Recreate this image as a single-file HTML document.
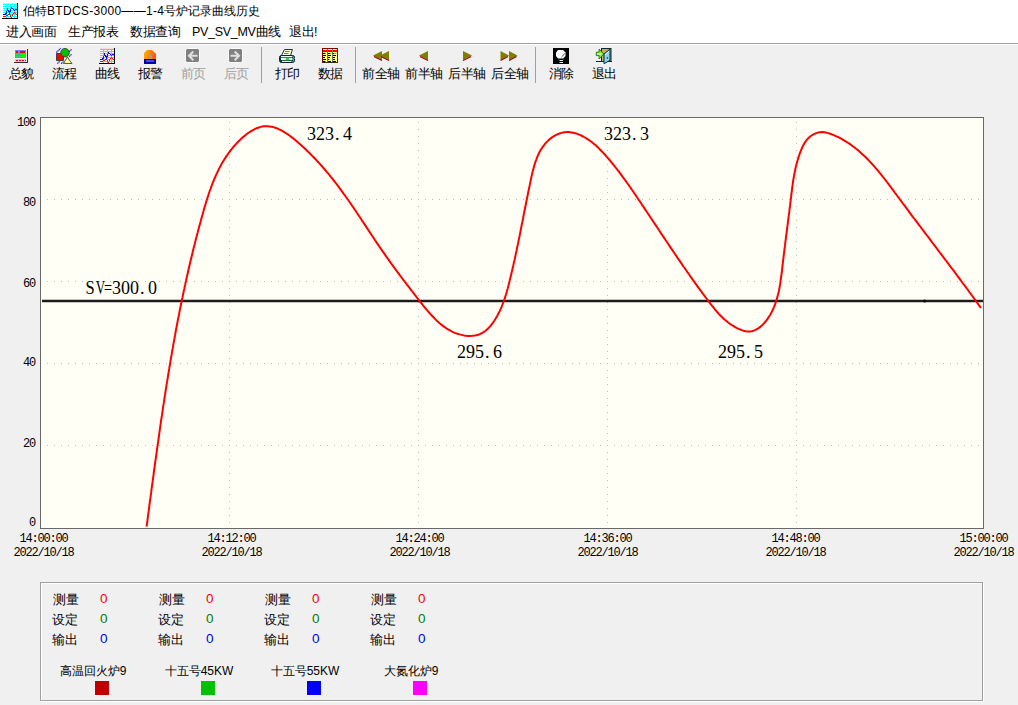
<!DOCTYPE html>
<html><head><meta charset="utf-8">
<style>
html,body{margin:0;padding:0;}
body{width:1018px;height:705px;overflow:hidden;background:#f0f0f0;position:relative;font-family:"Liberation Sans",sans-serif;font-size:12.5px;color:#000;}
#top{position:absolute;left:0;top:0;width:1018px;height:43px;background:#fff;}
#sep1{position:absolute;left:0;top:43px;width:1018px;height:1px;background:#a0a0a0;}
#sep2{position:absolute;left:0;top:44px;width:1018px;height:1px;background:#fff;}
i{font-style:normal;display:inline-block;width:1em;text-align:center;}
.t{position:absolute;white-space:nowrap;line-height:14px;}
.tl{position:absolute;top:67px;width:60px;text-align:center;line-height:14px;white-space:nowrap;}
.tl.dis{color:#a0a0a0;}
.vs{position:absolute;top:47px;width:1px;height:36px;background:#a0a0a0;}
.ic{position:absolute;}
#chart{position:absolute;left:0;top:0;}
.g{stroke:#bcbcb8;stroke-width:1;stroke-dasharray:1 6;}
.yl{position:absolute;left:0;width:35px;text-align:right;font-family:"Liberation Mono",monospace;font-size:12px;line-height:12px;letter-spacing:-1.2px;}
.xl,.xd{position:absolute;width:80px;text-align:center;font-family:"Liberation Mono",monospace;font-size:12px;line-height:12px;letter-spacing:-1.2px;}
.lbl{position:absolute;font-family:"Liberation Serif",serif;font-size:18px;line-height:18px;white-space:nowrap;}
.c{display:inline-block;width:9px;text-align:center;}
.sq8{display:inline-block;transform:scaleX(0.78);}
#panel{position:absolute;left:40px;top:582px;width:941px;height:117px;border:1px solid #a0a0a0;box-shadow:1px 1px 0 #fff, inset 1px 1px 0 #fff;}
.lg,.lz{position:absolute;line-height:14px;white-space:nowrap;}
.lz{font-size:13.5px;margin-top:-1px;}
.ln{position:absolute;width:100px;text-align:center;line-height:14px;white-space:nowrap;font-size:12px;}
.sq{position:absolute;width:14px;height:14px;}
</style></head><body>
<div id="top"></div>
<div id="sep1"></div><div id="sep2"></div>

<div class="t" style="left:23px;top:4px;font-size:12px;letter-spacing:0.3px"><i>伯</i><i>特</i>BTDCS-3000——1-4<i>号</i><i>炉</i><i>记</i><i>录</i><i>曲</i><i>线</i><i>历</i><i>史</i></div>

<div class="t" style="left:6px;top:25px"><i>进</i><i>入</i><i>画</i><i>面</i></div>
<div class="t" style="left:68px;top:25px"><i>生</i><i>产</i><i>报</i><i>表</i></div>
<div class="t" style="left:130px;top:25px"><i>数</i><i>据</i><i>查</i><i>询</i></div>
<div class="t" style="left:192px;top:25px;letter-spacing:-0.3px">PV_SV_MV<i>曲</i><i>线</i></div>
<div class="t" style="left:289px;top:25px"><i>退</i><i>出</i>!</div>

<!-- toolbar -->
<svg style="position:absolute;left:0;top:0" width="700" height="90" viewBox="0 0 700 90">

<g shape-rendering="crispEdges">
<rect x="3" y="3" width="14" height="15" fill="#00ffff"/>
<rect x="3" y="3" width="14" height="1" fill="#ffd8d8"/>
<g fill="#ffffff">
<rect x="3" y="5" width="3" height="1"/><rect x="7" y="5" width="3" height="1"/><rect x="11" y="5" width="3" height="1"/><rect x="15" y="5" width="2" height="1"/>
<rect x="3" y="7" width="3" height="1"/><rect x="7" y="7" width="3" height="1"/><rect x="11" y="7" width="3" height="1"/><rect x="15" y="7" width="2" height="1"/>
<rect x="3" y="9" width="3" height="1"/><rect x="7" y="9" width="3" height="1"/><rect x="11" y="9" width="3" height="1"/><rect x="15" y="9" width="2" height="1"/>
<rect x="3" y="11" width="3" height="1"/><rect x="7" y="11" width="3" height="1"/><rect x="11" y="11" width="3" height="1"/><rect x="15" y="11" width="2" height="1"/>
<rect x="3" y="13" width="3" height="1"/><rect x="7" y="13" width="3" height="1"/><rect x="11" y="13" width="3" height="1"/><rect x="15" y="13" width="2" height="1"/>
<rect x="3" y="15" width="3" height="1"/><rect x="7" y="15" width="3" height="1"/><rect x="11" y="15" width="3" height="1"/><rect x="15" y="15" width="2" height="1"/>
<rect x="3" y="17" width="3" height="1"/><rect x="7" y="17" width="3" height="1"/><rect x="11" y="17" width="3" height="1"/><rect x="15" y="17" width="2" height="1"/>
</g>
<g fill="#0000ff">
<rect x="3" y="14" width="3" height="1"/><rect x="5" y="13" width="2" height="1"/><rect x="6" y="11" width="1" height="2"/><rect x="7" y="8" width="1" height="3"/><rect x="8" y="10" width="1" height="2"/><rect x="9" y="11" width="1" height="3"/><rect x="10" y="9" width="1" height="3"/><rect x="11" y="7" width="1" height="2"/><rect x="12" y="8" width="1" height="1"/><rect x="13" y="9" width="1" height="1"/><rect x="14" y="10" width="1" height="1"/><rect x="15" y="9" width="2" height="1"/>
</g>
<g fill="#ff0000">
<rect x="3" y="16" width="3" height="1"/><rect x="6" y="15" width="2" height="1"/><rect x="8" y="14" width="2" height="1"/><rect x="10" y="15" width="1" height="2"/><rect x="11" y="17" width="1" height="1"/><rect x="12" y="14" width="1" height="2"/><rect x="13" y="13" width="1" height="1"/><rect x="14" y="12" width="1" height="1"/><rect x="15" y="13" width="1" height="1"/><rect x="16" y="14" width="1" height="1"/>
</g>
<rect x="17" y="3" width="1" height="16" fill="#000"/>
<rect x="2" y="18" width="16" height="1" fill="#000"/>
</g>
<g transform="translate(97,45)" shape-rendering="crispEdges">
<rect x="3" y="3" width="14" height="15" fill="#00ffff"/>
<rect x="3" y="3" width="14" height="1" fill="#ffd8d8"/>
<g fill="#ffffff">
<rect x="3" y="5" width="3" height="1"/><rect x="7" y="5" width="3" height="1"/><rect x="11" y="5" width="3" height="1"/><rect x="15" y="5" width="2" height="1"/>
<rect x="3" y="7" width="3" height="1"/><rect x="7" y="7" width="3" height="1"/><rect x="11" y="7" width="3" height="1"/><rect x="15" y="7" width="2" height="1"/>
<rect x="3" y="9" width="3" height="1"/><rect x="7" y="9" width="3" height="1"/><rect x="11" y="9" width="3" height="1"/><rect x="15" y="9" width="2" height="1"/>
<rect x="3" y="11" width="3" height="1"/><rect x="7" y="11" width="3" height="1"/><rect x="11" y="11" width="3" height="1"/><rect x="15" y="11" width="2" height="1"/>
<rect x="3" y="13" width="3" height="1"/><rect x="7" y="13" width="3" height="1"/><rect x="11" y="13" width="3" height="1"/><rect x="15" y="13" width="2" height="1"/>
<rect x="3" y="15" width="3" height="1"/><rect x="7" y="15" width="3" height="1"/><rect x="11" y="15" width="3" height="1"/><rect x="15" y="15" width="2" height="1"/>
<rect x="3" y="17" width="3" height="1"/><rect x="7" y="17" width="3" height="1"/><rect x="11" y="17" width="3" height="1"/><rect x="15" y="17" width="2" height="1"/>
</g>
<g fill="#0000ff">
<rect x="3" y="14" width="3" height="1"/><rect x="5" y="13" width="2" height="1"/><rect x="6" y="11" width="1" height="2"/><rect x="7" y="8" width="1" height="3"/><rect x="8" y="10" width="1" height="2"/><rect x="9" y="11" width="1" height="3"/><rect x="10" y="9" width="1" height="3"/><rect x="11" y="7" width="1" height="2"/><rect x="12" y="8" width="1" height="1"/><rect x="13" y="9" width="1" height="1"/><rect x="14" y="10" width="1" height="1"/><rect x="15" y="9" width="2" height="1"/>
</g>
<g fill="#ff0000">
<rect x="3" y="16" width="3" height="1"/><rect x="6" y="15" width="2" height="1"/><rect x="8" y="14" width="2" height="1"/><rect x="10" y="15" width="1" height="2"/><rect x="11" y="17" width="1" height="1"/><rect x="12" y="14" width="1" height="2"/><rect x="13" y="13" width="1" height="1"/><rect x="14" y="12" width="1" height="1"/><rect x="15" y="13" width="1" height="1"/><rect x="16" y="14" width="1" height="1"/>
</g>
<rect x="17" y="3" width="1" height="16" fill="#000"/>
<rect x="2" y="18" width="16" height="1" fill="#000"/>
</g>

<!-- zongmao -->
<g shape-rendering="crispEdges">
<rect x="14" y="49" width="13" height="13" fill="#f4f4e8"/>
<rect x="15" y="50" width="11" height="8" fill="#8080ff"/>
<rect x="16" y="51" width="2" height="2" fill="#ff0000"/><rect x="20" y="51" width="5" height="2" fill="#ff0000"/>
<rect x="16" y="54" width="2" height="1" fill="#00ff00"/><rect x="20" y="54" width="5" height="1" fill="#00ff00"/>
<rect x="16" y="56" width="2" height="1" fill="#00ff00"/><rect x="20" y="56" width="5" height="1" fill="#00ff00"/>
<rect x="15" y="58" width="11" height="1" fill="#ffffff"/>
<rect x="15" y="59" width="11" height="3" fill="#c8c8ff"/>
<rect x="16" y="60" width="2" height="1" fill="#ff0000"/><rect x="19" y="60" width="2" height="1" fill="#ff0000"/><rect x="22" y="60" width="2" height="1" fill="#ff0000"/><rect x="25" y="60" width="1" height="1" fill="#ff0000"/>
<rect x="27" y="49" width="1" height="14" fill="#303030"/>
<rect x="14" y="62" width="14" height="1" fill="#303030"/>
</g>

<!-- liucheng -->
<g>
<path d="M56.5 53.5H61.5L63.5 55.5V60.5H56.5Z" fill="#ff0000" stroke="#404040" stroke-width="1"/>
<circle cx="65" cy="52.7" r="4.3" fill="#00c000" stroke="#303030" stroke-width="0.8"/>
<path d="M67.5 57L70 61L72 63.5H63.5L65.5 60Z" fill="#ffff90" stroke="#303030" stroke-width="0.8"/>
<g stroke="#0000ff" stroke-width="1.1" stroke-dasharray="1.3 0.5">
<line x1="56.3" y1="52.5" x2="60.7" y2="48.2"/><line x1="57.4" y1="63.6" x2="59.7" y2="61.2"/><line x1="61.2" y1="63.6" x2="63.9" y2="61.3"/><line x1="69.2" y1="51.6" x2="71.7" y2="49.3"/><line x1="69.2" y1="56.6" x2="71.7" y2="54.2"/>
</g>
</g>

<!-- baojing -->
<defs><linearGradient id="og" x1="0" y1="0" x2="1" y2="0.3"><stop offset="0" stop-color="#ffb800"/><stop offset="1" stop-color="#ff5800"/></linearGradient></defs>
<path d="M144 59V53L147 50H152L156 54V59Z" fill="url(#og)"/>
<path d="M149 54H150.5L152 57V59H149Z" fill="#90a0b0"/>
<rect x="144" y="59" width="12" height="5" fill="#0000a0"/>
<rect x="146" y="60" width="8" height="2" fill="#4848e0"/>

<!-- qianye / houye -->
<rect x="185.5" y="48.5" width="14" height="14" rx="2" fill="#808080" stroke="#ffffff" stroke-width="1"/>
<path d="M193.3 51.5L189 55.8L193.3 60.2M189.5 55.8H197.5" fill="none" stroke="#e0e0e0" stroke-width="2"/>
<rect x="228.5" y="48.5" width="14" height="14" rx="2" fill="#808080" stroke="#ffffff" stroke-width="1"/>
<path d="M234.7 51.5L239 55.8L234.7 60.2M238.5 55.8H230.5" fill="none" stroke="#e0e0e0" stroke-width="2"/>

<!-- dayin -->
<path d="M284.5 49.5H292.5L290.5 55.5H281.5Z" fill="#ffffc8" stroke="#1c3c3c" stroke-width="1"/>
<path d="M285 51.5H289.5M284 53.5H288.5" stroke="#707060" stroke-width="0.9"/>
<rect x="279.5" y="55.5" width="15" height="7" rx="2" fill="#0a3a3a" stroke="#002a2a" stroke-width="1"/>
<rect x="281" y="56" width="11" height="1.3" fill="#f0ffff"/>
<rect x="281" y="58" width="11.5" height="2" fill="#f4ffff"/>
<rect x="285.8" y="58" width="3.2" height="2" fill="#20e020"/>
<rect x="282" y="60.8" width="9.5" height="1.2" fill="#e0f4ff"/>
<path d="M292.5 56.5L294 57.5M293 59.5L294.5 58.5M292.5 61.5L294 60.5" stroke="#a0e0e0" stroke-width="0.9"/>
<!-- shuju -->
<g shape-rendering="crispEdges">
<rect x="322" y="48" width="16" height="15" fill="#ffffff"/>
<rect x="322" y="48" width="16" height="1" fill="#800000"/>
<rect x="322" y="48" width="1" height="15" fill="#800000"/>
<rect x="337" y="48" width="1" height="15" fill="#303030"/>
<rect x="322" y="62" width="16" height="1" fill="#303030"/>
<rect x="327" y="49" width="1" height="13" fill="#707070"/>
<rect x="332" y="49" width="1" height="13" fill="#707070"/>
<g fill="#ff0000"><rect x="323" y="50" width="4" height="2"/><rect x="328" y="50" width="4" height="2"/><rect x="333" y="50" width="4" height="2"/></g>
<g fill="#ffff80"><rect x="323" y="52" width="4" height="1"/><rect x="328" y="52" width="4" height="1"/><rect x="333" y="52" width="4" height="1"/>
<rect x="323" y="54" width="4" height="1"/><rect x="328" y="54" width="4" height="1"/><rect x="333" y="54" width="4" height="1"/>
<rect x="323" y="56" width="4" height="1"/><rect x="328" y="56" width="4" height="1"/><rect x="333" y="56" width="4" height="1"/>
<rect x="323" y="58" width="4" height="1"/><rect x="328" y="58" width="4" height="1"/><rect x="333" y="58" width="4" height="1"/>
<rect x="323" y="60" width="4" height="1"/><rect x="328" y="60" width="4" height="1"/><rect x="333" y="60" width="4" height="1"/></g>
<g fill="#000000"><rect x="323" y="53" width="3" height="1"/><rect x="328" y="53" width="3" height="1"/><rect x="333" y="53" width="3" height="1"/>
<rect x="323" y="55" width="3" height="1"/><rect x="328" y="55" width="3" height="1"/><rect x="333" y="55" width="3" height="1"/>
<rect x="323" y="57" width="2" height="1"/><rect x="328" y="57" width="2" height="1"/><rect x="333" y="57" width="2" height="1"/>
<rect x="323" y="59" width="3" height="1"/><rect x="328" y="59" width="2" height="1"/><rect x="333" y="59" width="2" height="1"/>
<rect x="323" y="61" width="2" height="1"/><rect x="328" y="61" width="3" height="1"/><rect x="333" y="61" width="3" height="1"/></g>
<g fill="#00ff00"><rect x="325" y="53" width="1" height="1"/><rect x="330" y="53" width="1" height="1"/><rect x="334" y="53" width="2" height="1"/><rect x="329" y="59" width="1" height="1"/><rect x="325" y="61" width="1" height="1"/></g>
</g>

<!-- axis arrows -->
<g>
<path d="M373 55.5L382 51V60Z M380 55.5L389 51V60Z" fill="#808000"/>
<path d="M374 56.5L382 60.5M381 56.5L389 60.5" stroke="#a00000" stroke-width="1.2"/>
<path d="M419 55.5L428 51V60Z" fill="#808000"/>
<path d="M420 56.5L428 60.5" stroke="#a00000" stroke-width="1.2"/>
<path d="M472 55.5L463 51V60Z" fill="#808000"/>
<path d="M471 56.5L463 60.5" stroke="#a00000" stroke-width="1.2"/>
<path d="M509 55.5L500.5 51V60Z M517.5 55.5L509 51V60Z" fill="#808000"/>
<path d="M508 56.5L500.5 60.5M516.5 56.5L509 60.5" stroke="#a00000" stroke-width="1.2"/>
</g>

<!-- xiaochu -->
<rect x="553" y="48" width="16" height="16" fill="#000"/>
<path d="M558 50H563L565.5 52.5V56L563 58.5H558L556 56V52.5Z" fill="#ffffff"/>
<path d="M562 56L565 53M561 57.5L564.5 54.5" stroke="#606060" stroke-width="0.6"/>
<rect x="558" y="58.5" width="1.2" height="1" fill="#00a0a0"/><rect x="562.5" y="58.5" width="1.2" height="1" fill="#00a0a0"/>
<rect x="559.5" y="60" width="3.5" height="0.9" fill="#ffffff"/><rect x="559.5" y="62" width="3.5" height="0.9" fill="#ffffff"/>

<!-- tuichu -->
<rect x="601.5" y="48.5" width="9.5" height="13" fill="#c8a858" stroke="#003040" stroke-width="1"/>
<path d="M604 54L610 49V60.3L604 63.7Z" fill="#88d4f0" stroke="#003040" stroke-width="1"/>
<path d="M605 55L609 51.5" stroke="#d8f4ff" stroke-width="1"/>
<rect x="606.8" y="57.2" width="1" height="1.6" fill="#003040"/>
<path d="M596.3 52.2H599.1V49.1L603.9 54L599.1 59V55.6H596.3Z" fill="#7cf030" stroke="#2a6a00" stroke-width="0.9"/>
<path d="M597 54H601.5" stroke="#e8ffd0" stroke-width="1"/>
<path d="M596 61.5H602" stroke="#003030" stroke-width="1"/>
<path d="M610.8 60.8L612 62" stroke="#003030" stroke-width="1"/>
</svg>

<div class="tl" style="left:-9px"><i>总</i><i>貌</i></div>
<div class="tl" style="left:34px"><i>流</i><i>程</i></div>
<div class="tl" style="left:77px"><i>曲</i><i>线</i></div>
<div class="tl" style="left:120px"><i>报</i><i>警</i></div>
<div class="tl dis" style="left:163px"><i>前</i><i>页</i></div>
<div class="tl dis" style="left:206px"><i>后</i><i>页</i></div>
<div class="tl" style="left:257px"><i>打</i><i>印</i></div>
<div class="tl" style="left:300px"><i>数</i><i>据</i></div>
<div class="tl" style="left:351px"><i>前</i><i>全</i><i>轴</i></div>
<div class="tl" style="left:394px"><i>前</i><i>半</i><i>轴</i></div>
<div class="tl" style="left:437px"><i>后</i><i>半</i><i>轴</i></div>
<div class="tl" style="left:480px"><i>后</i><i>全</i><i>轴</i></div>
<div class="tl" style="left:531px"><i>消</i><i>除</i></div>
<div class="tl" style="left:574px"><i>退</i><i>出</i></div>

<div class="vs" style="left:261px"></div>
<div class="vs" style="left:355px"></div>
<div class="vs" style="left:535px"></div>

<!-- chart -->
<svg id="chart" width="1018" height="705" viewBox="0 0 1018 705">
<rect x="40.5" y="117.5" width="943" height="411" fill="#fffff5" stroke="#696969" stroke-width="1"/>
<line x1="47" y1="445.5" x2="983" y2="445.5" class="g"/>
<line x1="47" y1="363.5" x2="983" y2="363.5" class="g"/>
<line x1="47" y1="281.5" x2="983" y2="281.5" class="g"/>
<line x1="47" y1="199.5" x2="983" y2="199.5" class="g"/>
<line x1="229.5" y1="122" x2="229.5" y2="199" class="g"/>
<line x1="229.5" y1="206" x2="229.5" y2="281" class="g"/>
<line x1="229.5" y1="288" x2="229.5" y2="363" class="g"/>
<line x1="229.5" y1="370" x2="229.5" y2="445" class="g"/>
<line x1="229.5" y1="452" x2="229.5" y2="527" class="g"/>
<line x1="418.5" y1="122" x2="418.5" y2="199" class="g"/>
<line x1="418.5" y1="206" x2="418.5" y2="281" class="g"/>
<line x1="418.5" y1="288" x2="418.5" y2="363" class="g"/>
<line x1="418.5" y1="370" x2="418.5" y2="445" class="g"/>
<line x1="418.5" y1="452" x2="418.5" y2="527" class="g"/>
<line x1="607.5" y1="122" x2="607.5" y2="199" class="g"/>
<line x1="607.5" y1="206" x2="607.5" y2="281" class="g"/>
<line x1="607.5" y1="288" x2="607.5" y2="363" class="g"/>
<line x1="607.5" y1="370" x2="607.5" y2="445" class="g"/>
<line x1="607.5" y1="452" x2="607.5" y2="527" class="g"/>
<line x1="796.5" y1="122" x2="796.5" y2="199" class="g"/>
<line x1="796.5" y1="206" x2="796.5" y2="281" class="g"/>
<line x1="796.5" y1="288" x2="796.5" y2="363" class="g"/>
<line x1="796.5" y1="370" x2="796.5" y2="445" class="g"/>
<line x1="796.5" y1="452" x2="796.5" y2="527" class="g"/>
<line x1="42" y1="301" x2="983" y2="301" stroke="#1c1c1c" stroke-width="2.3"/>
<circle cx="924.6" cy="301" r="1.5" fill="#0c0c0c"/>
<polyline points="146.6,526.6 146.9,524.4 147.2,522.3 147.5,520.1 147.7,518.0 148.0,515.9 148.3,513.7 148.6,511.6 148.9,509.5 149.2,507.3 149.4,505.2 149.7,503.0 150.0,500.9 150.3,498.8 150.6,496.6 150.9,494.5 151.2,492.4 151.4,490.2 151.7,488.1 152.0,486.0 152.3,483.8 152.6,481.7 152.9,479.6 153.2,477.4 153.5,475.3 153.7,473.2 154.0,471.0 154.3,468.9 154.6,466.8 154.9,464.6 155.2,462.5 155.5,460.4 155.8,458.2 156.1,456.1 156.4,454.0 156.7,451.9 157.0,449.7 157.3,447.6 157.6,445.5 157.9,443.3 158.2,441.2 158.5,439.1 158.8,437.0 159.1,434.8 159.4,432.7 159.7,430.6 160.0,428.4 160.3,426.3 160.6,424.2 160.9,422.1 161.2,419.9 161.5,417.8 161.9,415.7 162.2,413.6 162.5,411.4 162.8,409.3 163.1,407.2 163.4,405.1 163.8,402.9 164.1,400.8 164.4,398.7 164.7,396.6 165.1,394.5 165.4,392.3 165.7,390.2 166.1,388.1 166.4,386.0 166.7,383.8 167.1,381.7 167.4,379.6 167.8,377.5 168.1,375.4 168.5,373.3 168.8,371.1 169.2,369.0 169.5,366.9 169.9,364.8 170.2,362.7 170.6,360.6 170.9,358.4 171.3,356.3 171.7,354.2 172.0,352.1 172.4,350.0 172.8,347.9 173.1,345.8 173.5,343.6 173.9,341.5 174.3,339.4 174.7,337.3 175.1,335.2 175.4,333.1 175.8,331.0 176.2,328.9 176.6,326.8 177.0,324.7 177.4,322.5 177.8,320.4 178.2,318.3 178.7,316.2 179.1,314.1 179.5,312.0 179.9,309.9 180.3,307.8 180.7,305.7 181.2,303.6 181.6,301.5 182.0,299.4 182.5,297.3 182.9,295.2 183.4,293.1 183.8,291.0 184.3,288.9 184.7,286.8 185.2,284.7 185.6,282.6 186.1,280.5 186.5,278.4 187.0,276.3 187.5,274.2 188.0,272.1 188.4,270.0 188.9,267.9 189.4,265.8 189.9,263.7 190.4,261.6 190.9,259.5 191.4,257.5 191.9,255.4 192.4,253.3 192.9,251.2 193.4,249.1 193.9,247.0 194.5,244.9 195.0,242.8 195.5,240.7 196.0,238.7 196.6,236.6 197.1,234.5 197.7,232.4 198.2,230.3 198.8,228.2 199.3,226.1 199.9,224.1 200.5,222.0 201.0,219.9 201.6,217.8 202.2,215.7 202.8,213.7 203.4,211.6 203.9,209.5 204.5,207.4 205.2,205.4 205.8,203.3 206.4,201.2 207.0,199.2 207.7,197.1 208.4,195.1 209.0,193.0 209.7,191.0 210.5,189.0 211.2,186.9 212.0,184.9 212.7,182.9 213.5,181.0 214.3,179.0 215.2,177.0 216.0,175.1 216.9,173.1 217.9,171.2 218.8,169.3 219.8,167.4 220.8,165.5 221.8,163.6 222.9,161.8 224.0,160.0 225.2,158.1 226.3,156.4 227.6,154.6 228.8,152.8 230.1,151.1 231.4,149.4 232.8,147.7 234.2,146.0 235.7,144.4 237.2,142.7 238.7,141.2 240.3,139.6 242.0,138.1 243.7,136.6 245.4,135.2 247.1,133.8 248.9,132.5 250.7,131.4 252.5,130.3 254.4,129.3 256.2,128.4 258.1,127.7 260.0,127.1 261.9,126.6 263.8,126.3 265.7,126.2 267.6,126.2 269.5,126.4 271.4,126.7 273.3,127.1 275.2,127.7 277.1,128.4 279.0,129.3 280.9,130.2 282.8,131.2 284.6,132.3 286.5,133.5 288.3,134.7 290.1,136.0 291.9,137.4 293.7,138.8 295.5,140.3 297.2,141.7 298.9,143.2 300.7,144.7 302.3,146.3 304.0,147.8 305.6,149.3 307.3,150.9 308.9,152.4 310.4,154.0 312.0,155.6 313.6,157.2 315.1,158.8 316.6,160.4 318.1,162.0 319.6,163.6 321.0,165.2 322.5,166.8 323.9,168.5 325.3,170.1 326.7,171.8 328.1,173.4 329.5,175.1 330.8,176.8 332.2,178.5 333.5,180.1 334.8,181.8 336.1,183.5 337.4,185.2 338.7,186.9 340.0,188.6 341.2,190.4 342.5,192.1 343.7,193.8 345.0,195.5 346.2,197.3 347.4,199.0 348.7,200.7 349.9,202.5 351.1,204.2 352.3,206.0 353.5,207.7 354.7,209.5 355.9,211.2 357.0,213.0 358.2,214.8 359.4,216.5 360.6,218.3 361.7,220.1 362.9,221.8 364.1,223.6 365.3,225.4 366.4,227.1 367.6,228.9 368.8,230.7 369.9,232.4 371.1,234.2 372.3,236.0 373.5,237.7 374.6,239.5 375.8,241.3 377.0,243.1 378.2,244.8 379.4,246.6 380.6,248.3 381.8,250.1 383.0,251.9 384.3,253.6 385.5,255.4 386.7,257.1 388.0,258.9 389.2,260.6 390.4,262.4 391.7,264.1 393.0,265.9 394.2,267.6 395.5,269.3 396.8,271.1 398.1,272.8 399.4,274.6 400.7,276.3 402.0,278.0 403.3,279.8 404.6,281.5 405.9,283.2 407.2,285.0 408.6,286.7 409.9,288.4 411.2,290.2 412.6,291.9 413.9,293.6 415.3,295.4 416.6,297.1 418.0,298.8 419.3,300.6 420.7,302.3 422.1,304.0 423.4,305.8 424.8,307.5 426.2,309.2 427.6,310.8 429.1,312.5 430.5,314.1 432.0,315.7 433.5,317.3 435.0,318.9 436.5,320.4 438.0,321.8 439.6,323.2 441.3,324.6 442.9,325.9 444.6,327.1 446.3,328.3 448.1,329.4 449.9,330.4 451.7,331.4 453.6,332.3 455.5,333.1 457.5,333.8 459.5,334.4 461.6,334.9 463.7,335.4 465.8,335.7 468.0,335.9 470.1,335.9 472.2,335.8 474.3,335.6 476.3,335.2 478.3,334.7 480.3,333.9 482.1,333.0 483.9,331.9 485.6,330.7 487.2,329.3 488.8,327.7 490.3,326.1 491.7,324.4 493.0,322.6 494.3,320.7 495.5,318.8 496.6,316.9 497.7,315.0 498.7,313.0 499.7,311.1 500.6,309.1 501.5,307.1 502.3,305.0 503.1,303.0 503.9,301.0 504.6,298.9 505.2,296.8 505.9,294.8 506.5,292.7 507.1,290.6 507.7,288.5 508.2,286.4 508.8,284.3 509.3,282.2 509.8,280.1 510.3,278.0 510.8,275.9 511.3,273.9 511.8,271.8 512.3,269.7 512.8,267.6 513.3,265.5 513.7,263.5 514.2,261.4 514.7,259.3 515.1,257.2 515.6,255.1 516.0,253.1 516.5,251.0 516.9,248.9 517.3,246.8 517.8,244.8 518.2,242.7 518.6,240.6 519.0,238.5 519.5,236.4 519.9,234.4 520.3,232.3 520.7,230.2 521.1,228.1 521.5,226.0 521.9,223.9 522.4,221.8 522.8,219.7 523.2,217.6 523.6,215.5 524.0,213.4 524.4,211.3 524.8,209.2 525.3,207.1 525.7,205.0 526.1,202.9 526.5,200.8 527.0,198.6 527.4,196.5 527.8,194.4 528.2,192.2 528.7,190.1 529.1,187.9 529.6,185.8 530.0,183.6 530.5,181.4 530.9,179.3 531.4,177.1 531.9,174.9 532.4,172.8 532.9,170.6 533.5,168.5 534.1,166.3 534.7,164.2 535.3,162.2 536.1,160.1 536.8,158.1 537.6,156.1 538.5,154.2 539.4,152.3 540.4,150.5 541.5,148.7 542.6,146.9 543.9,145.3 545.2,143.6 546.6,142.1 548.1,140.6 549.6,139.2 551.3,137.9 553.1,136.7 554.9,135.6 556.8,134.6 558.8,133.8 560.7,133.1 562.8,132.6 564.8,132.3 566.9,132.1 569.0,132.1 571.1,132.4 573.2,132.8 575.2,133.3 577.3,133.9 579.2,134.7 581.2,135.5 583.1,136.5 584.9,137.5 586.8,138.6 588.6,139.8 590.3,141.0 592.0,142.3 593.7,143.7 595.4,145.1 597.0,146.6 598.6,148.1 600.2,149.7 601.7,151.3 603.3,152.9 604.8,154.5 606.2,156.2 607.7,157.9 609.1,159.5 610.5,161.2 611.9,162.9 613.3,164.6 614.7,166.3 616.0,168.0 617.3,169.7 618.7,171.4 620.0,173.1 621.2,174.8 622.5,176.6 623.8,178.3 625.0,180.0 626.3,181.7 627.5,183.5 628.8,185.2 630.0,187.0 631.2,188.7 632.4,190.5 633.6,192.2 634.8,194.0 636.0,195.7 637.2,197.5 638.4,199.3 639.6,201.0 640.8,202.8 641.9,204.6 643.1,206.3 644.3,208.1 645.5,209.9 646.7,211.7 647.9,213.5 649.1,215.2 650.2,217.0 651.4,218.8 652.6,220.6 653.8,222.4 655.0,224.1 656.2,225.9 657.4,227.7 658.6,229.5 659.7,231.3 660.9,233.1 662.1,234.9 663.3,236.7 664.5,238.4 665.7,240.2 666.9,242.0 668.1,243.8 669.3,245.6 670.5,247.4 671.7,249.2 672.9,250.9 674.1,252.7 675.3,254.5 676.5,256.3 677.7,258.1 679.0,259.9 680.2,261.6 681.4,263.4 682.6,265.2 683.8,267.0 685.1,268.7 686.3,270.5 687.5,272.3 688.8,274.0 690.0,275.8 691.3,277.6 692.5,279.3 693.8,281.1 695.0,282.8 696.3,284.6 697.5,286.3 698.8,288.1 700.1,289.8 701.4,291.6 702.6,293.3 703.9,295.0 705.2,296.8 706.5,298.5 707.8,300.2 709.1,301.9 710.4,303.7 711.7,305.4 713.1,307.0 714.4,308.7 715.8,310.4 717.2,312.0 718.6,313.6 720.1,315.2 721.6,316.7 723.2,318.2 724.8,319.7 726.4,321.1 728.1,322.5 729.9,323.8 731.7,325.0 733.6,326.2 735.5,327.4 737.5,328.4 739.6,329.3 741.6,330.1 743.7,330.8 745.7,331.2 747.8,331.4 749.8,331.4 751.7,331.2 753.6,330.6 755.5,329.9 757.2,329.0 758.9,327.9 760.6,326.6 762.2,325.2 763.7,323.6 765.1,322.0 766.5,320.3 767.7,318.6 768.9,316.8 770.1,315.0 771.1,313.1 772.1,311.2 773.0,309.3 773.9,307.3 774.7,305.4 775.4,303.4 776.1,301.3 776.7,299.3 777.3,297.2 777.9,295.1 778.4,293.0 778.9,290.9 779.3,288.7 779.7,286.6 780.1,284.4 780.4,282.3 780.7,280.1 781.0,277.9 781.3,275.7 781.6,273.5 781.9,271.3 782.1,269.1 782.4,267.0 782.6,264.8 782.9,262.6 783.1,260.4 783.4,258.3 783.6,256.1 783.9,254.0 784.2,251.8 784.4,249.7 784.7,247.6 785.0,245.4 785.2,243.3 785.5,241.2 785.8,239.1 786.0,237.0 786.3,234.8 786.6,232.7 786.9,230.6 787.1,228.5 787.4,226.4 787.7,224.3 787.9,222.2 788.2,220.1 788.5,218.0 788.7,215.9 789.0,213.8 789.3,211.7 789.5,209.6 789.8,207.5 790.1,205.4 790.3,203.3 790.6,201.1 790.8,199.0 791.1,196.9 791.3,194.8 791.6,192.7 791.9,190.5 792.1,188.4 792.4,186.3 792.7,184.1 793.0,182.0 793.3,179.9 793.7,177.7 794.1,175.6 794.4,173.5 794.9,171.3 795.3,169.2 795.8,167.1 796.3,164.9 796.9,162.8 797.5,160.7 798.1,158.6 798.8,156.4 799.5,154.3 800.3,152.2 801.1,150.1 802.0,148.0 803.0,145.9 804.0,144.0 805.2,142.1 806.4,140.3 807.8,138.7 809.3,137.3 810.9,136.0 812.6,134.8 814.4,133.9 816.2,133.1 818.1,132.6 820.1,132.2 822.1,132.1 824.1,132.3 826.1,132.6 828.2,133.1 830.3,133.8 832.3,134.6 834.3,135.4 836.3,136.3 838.3,137.2 840.2,138.2 842.1,139.2 843.9,140.3 845.7,141.4 847.5,142.5 849.3,143.7 851.1,144.9 852.8,146.2 854.5,147.5 856.1,148.8 857.8,150.1 859.4,151.5 861.0,152.9 862.6,154.4 864.1,155.8 865.7,157.3 867.2,158.8 868.7,160.4 870.2,161.9 871.6,163.5 873.1,165.1 874.5,166.7 875.9,168.4 877.4,170.0 878.7,171.7 880.1,173.4 881.5,175.1 882.9,176.8 884.2,178.5 885.5,180.2 886.9,182.0 888.2,183.7 889.5,185.4 890.8,187.2 892.1,188.9 893.4,190.7 894.7,192.5 896.0,194.2 897.3,196.0 898.6,197.7 899.9,199.5 901.2,201.2 902.5,203.0 903.8,204.7 905.1,206.4 906.4,208.2 907.7,209.9 909.0,211.6 910.2,213.3 911.5,215.1 912.8,216.8 914.1,218.5 915.4,220.2 916.7,221.9 918.0,223.6 919.3,225.3 920.6,227.0 921.8,228.7 923.1,230.4 924.4,232.1 925.7,233.8 927.0,235.5 928.3,237.2 929.6,238.9 930.9,240.6 932.1,242.3 933.4,244.0 934.7,245.7 936.0,247.4 937.3,249.1 938.6,250.8 939.8,252.5 941.1,254.2 942.4,255.9 943.7,257.6 945.0,259.3 946.3,261.0 947.5,262.7 948.8,264.4 950.1,266.1 951.4,267.8 952.7,269.5 954.0,271.2 955.2,272.9 956.5,274.6 957.8,276.4 959.1,278.1 960.4,279.8 961.6,281.5 962.9,283.3 964.2,285.0 965.5,286.7 966.8,288.5 968.1,290.2 969.3,292.0 970.6,293.7 971.9,295.5 973.2,297.2 974.5,299.0 975.7,300.8 977.0,302.5 978.3,304.3 979.6,306.1 980.9,307.9" fill="none" stroke="#ff0000" stroke-width="2" stroke-linejoin="round"/>
</svg>
<div class="yl" style="top:117px">100</div>
<div class="yl" style="top:197px">80</div>
<div class="yl" style="top:278px">60</div>
<div class="yl" style="top:357px">40</div>
<div class="yl" style="top:438px">20</div>
<div class="yl" style="top:517px">0</div>

<div class="xl" style="left:3.6px;top:533px">14:00:00</div>
<div class="xd" style="left:3.6px;top:547px">2022/10/18</div>
<div class="xl" style="left:191.6px;top:533px">14:12:00</div>
<div class="xd" style="left:191.6px;top:547px">2022/10/18</div>
<div class="xl" style="left:379.6px;top:533px">14:24:00</div>
<div class="xd" style="left:379.6px;top:547px">2022/10/18</div>
<div class="xl" style="left:567.6px;top:533px">14:36:00</div>
<div class="xd" style="left:567.6px;top:547px">2022/10/18</div>
<div class="xl" style="left:755.6px;top:533px">14:48:00</div>
<div class="xd" style="left:755.6px;top:547px">2022/10/18</div>
<div class="xl" style="left:943.6px;top:533px">15:00:00</div>
<div class="xd" style="left:943.6px;top:547px">2022/10/18</div>

<div class="lbl" style="left:307px;top:125px"><span class="c">3</span><span class="c">2</span><span class="c">3</span><span class="c" style="text-align:left;text-indent:1px">.</span><span class="c">4</span></div>
<div class="lbl" style="left:604px;top:125px"><span class="c">3</span><span class="c">2</span><span class="c">3</span><span class="c" style="text-align:left;text-indent:1px">.</span><span class="c">3</span></div>
<div class="lbl" style="left:457px;top:343px"><span class="c">2</span><span class="c">9</span><span class="c">5</span><span class="c" style="text-align:left;text-indent:1px">.</span><span class="c">6</span></div>
<div class="lbl" style="left:718px;top:343px"><span class="c">2</span><span class="c">9</span><span class="c">5</span><span class="c" style="text-align:left;text-indent:1px">.</span><span class="c">5</span></div>
<div class="lbl" style="left:85px;top:279px"><span class="c"><span class="sq8" style="transform:scaleX(0.92)">S</span></span><span class="c"><span class="sq8" style="transform:scaleX(0.72)">V</span></span><span class="c"><span class="sq8" style="transform:scaleX(0.80)">=</span></span><span class="c">3</span><span class="c">0</span><span class="c">0</span><span class="c" style="text-align:left;text-indent:1px">.</span><span class="c">0</span></div>


<!-- legend panel -->
<div id="panel"></div>
<div class="lg" style="left:53px;top:593px"><i>测</i><i>量</i></div><div class="lg" style="left:52px;top:613px"><i>设</i><i>定</i></div><div class="lg" style="left:52px;top:633px"><i>输</i><i>出</i></div><div class="lz" style="left:100px;top:593px;color:#ff0000">0</div><div class="lz" style="left:100px;top:613px;color:#008000">0</div><div class="lz" style="left:100px;top:633px;color:#0000ff">0</div><div class="ln" style="left:43px;top:664px"><i>高</i><i>温</i><i>回</i><i>火</i><i>炉</i>9</div><div class="sq" style="left:95px;top:681px;background:#c00000"></div>
<div class="lg" style="left:159px;top:593px"><i>测</i><i>量</i></div><div class="lg" style="left:158px;top:613px"><i>设</i><i>定</i></div><div class="lg" style="left:158px;top:633px"><i>输</i><i>出</i></div><div class="lz" style="left:206px;top:593px;color:#ff0000">0</div><div class="lz" style="left:206px;top:613px;color:#008000">0</div><div class="lz" style="left:206px;top:633px;color:#0000ff">0</div><div class="ln" style="left:149px;top:664px"><i>十</i><i>五</i><i>号</i>45KW</div><div class="sq" style="left:201px;top:681px;background:#00c000"></div>
<div class="lg" style="left:265px;top:593px"><i>测</i><i>量</i></div><div class="lg" style="left:264px;top:613px"><i>设</i><i>定</i></div><div class="lg" style="left:264px;top:633px"><i>输</i><i>出</i></div><div class="lz" style="left:312px;top:593px;color:#ff0000">0</div><div class="lz" style="left:312px;top:613px;color:#008000">0</div><div class="lz" style="left:312px;top:633px;color:#0000ff">0</div><div class="ln" style="left:255px;top:664px"><i>十</i><i>五</i><i>号</i>55KW</div><div class="sq" style="left:307px;top:681px;background:#0000ff"></div>
<div class="lg" style="left:371px;top:593px"><i>测</i><i>量</i></div><div class="lg" style="left:370px;top:613px"><i>设</i><i>定</i></div><div class="lg" style="left:370px;top:633px"><i>输</i><i>出</i></div><div class="lz" style="left:418px;top:593px;color:#ff0000">0</div><div class="lz" style="left:418px;top:613px;color:#008000">0</div><div class="lz" style="left:418px;top:633px;color:#0000ff">0</div><div class="ln" style="left:361px;top:664px"><i>大</i><i>氮</i><i>化</i><i>炉</i>9</div><div class="sq" style="left:413px;top:681px;background:#ff00ff"></div>

</body></html>
